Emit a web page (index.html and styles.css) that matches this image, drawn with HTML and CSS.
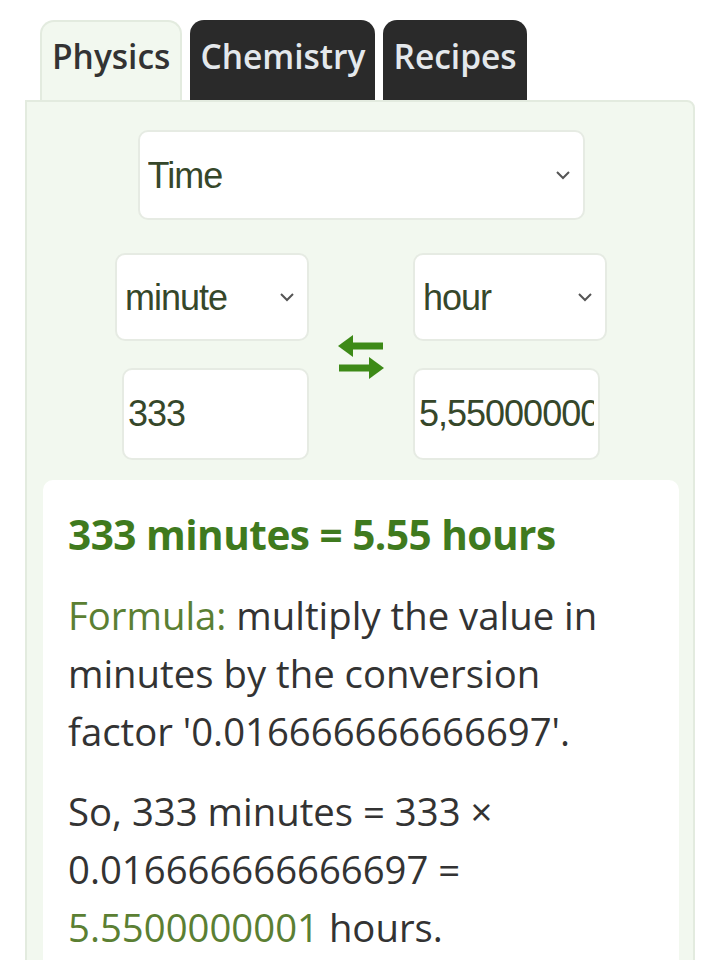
FILE: index.html
```html
<!DOCTYPE html>
<html lang="en">
<head>
    <meta charset="UTF-8" />
    <meta name="viewport" content="width=device-width, initial-scale=1.0" />
    <title>Unit Converter</title>
    <link rel="stylesheet" href="styles.css">
</head>
<body>
    <div class="converter">
        <div class="tabs">
            <div class="tab active">Physics</div>
            <div class="tab">Chemistry</div>
            <div class="tab">Recipes</div>
        </div>

        <div class="panel">
            <div class="quantity-row">
                <select class="field quantity">
                    <option>Time</option>
                </select>
            </div>

            <div class="units">
                <div class="unit-col">
                    <select class="field unit">
                        <option>minute</option>
                    </select>
                    <input class="field value" type="text" value="333" />
                </div>

                <button class="swap" title="Swap units">
                    <svg width="48" height="46" viewBox="0 0 48 46">
                        <path d="M46 12 H12" stroke="#3d8a17" stroke-width="7" fill="none"/>
                        <path d="M1 12 L16 1 L16 23 Z" fill="#3d8a17"/>
                        <path d="M2 34 H36" stroke="#3d8a17" stroke-width="7" fill="none"/>
                        <path d="M47 34 L32 23 L32 45 Z" fill="#3d8a17"/>
                    </svg>
                </button>

                <div class="unit-col">
                    <select class="field unit">
                        <option>hour</option>
                    </select>
                    <input class="field value" type="text" value="5,5500000001" />
                </div>
            </div>

            <div class="result">
                <h2 class="result-title">333 minutes = 5.55 hours</h2>
                <p><span class="hint">Formula:</span> multiply the value in minutes by the conversion factor '0.016666666666697'.</p>
                <p>So, 333 minutes = 333 × 0.016666666666697 = <span class="hint">5.5500000001</span> hours.</p>
            </div>
        </div>
    </div>
</body>
</html>
```

FILE: styles.css
```css
* {
    margin: 0;
    padding: 0;
    box-sizing: border-box;
}

body {
    font-family: 'Open Sans', 'Noto Sans', sans-serif;
    background: #ffffff;
    color: #333333;
}

.converter {
    width: 670px;
    margin-left: 25px;
    padding-top: 20px;
}

.tabs {
    display: flex;
    gap: 8px;
    padding-left: 15px;
}

.tab {
    height: 80px;
    padding: 13px 10px 0;
    font-size: 33.5px;
    font-weight: 600;
    border-radius: 14px 14px 0 0;
    background: #2a2a2a;
    color: #e4e8ec;
}

.tab.active {
    background: #f2f8ef;
    color: #333333;
    border: 2px solid #e3ebdf;
    border-bottom: none;
    padding: 11px 10px 0;
}

.panel {
    background: #f2f8ef;
    border: 2px solid #e3ebdf;
    border-radius: 0 8px 8px 8px;
    padding: 28px 14px 0 16px;
    min-height: 870px;
}

.quantity-row {
    display: flex;
    justify-content: center;
    margin-bottom: 33px;
}

.field {
    font-family: 'Liberation Sans', Arial, sans-serif;
    font-size: 36px;
    letter-spacing: -1px;
    color: #36472a;
    background: #ffffff;
    border: 2px solid #e6ebe3;
    border-radius: 10px;
    padding: 0 8px;
    outline: none;
}

select.field {
    appearance: none;
    background-image: url("data:image/svg+xml;utf8,<svg xmlns='http://www.w3.org/2000/svg' width='16' height='10' viewBox='0 0 16 10'><path d='M2 2 L8 8 L14 2' stroke='%23555' stroke-width='2' fill='none'/></svg>");
    background-repeat: no-repeat;
    background-position: right 12px center;
}

.quantity {
    width: 447px;
    height: 90px;
}

.units {
    display: grid;
    grid-template-columns: 194px 104px 194px;
    justify-content: center;
    align-items: center;
    margin-bottom: 20px;
}

.unit-col {
    display: flex;
    flex-direction: column;
    gap: 27px;
}

.unit {
    width: 194px;
    height: 88px;
}

.value {
    width: 187px;
    height: 92px;
    padding: 0 4px;
}

.unit-col:first-child .value {
    align-self: flex-end;
}

.swap {
    justify-self: center;
    background: none;
    border: none;
    padding: 0;
    display: flex;
}

.result {
    background: #ffffff;
    border-radius: 10px;
    padding: 27px 32px 20px 25px;
    min-height: 500px;
}

.result-title {
    font-size: 40.5px;
    font-weight: 700;
    color: #3f7a1e;
    letter-spacing: -0.5px;
    margin-bottom: 24px;
}

.result p {
    font-size: 38.3px;
    line-height: 58px;
    color: #333333;
    margin-bottom: 22px;
}

.hint {
    color: #5b7f33;
}
```
